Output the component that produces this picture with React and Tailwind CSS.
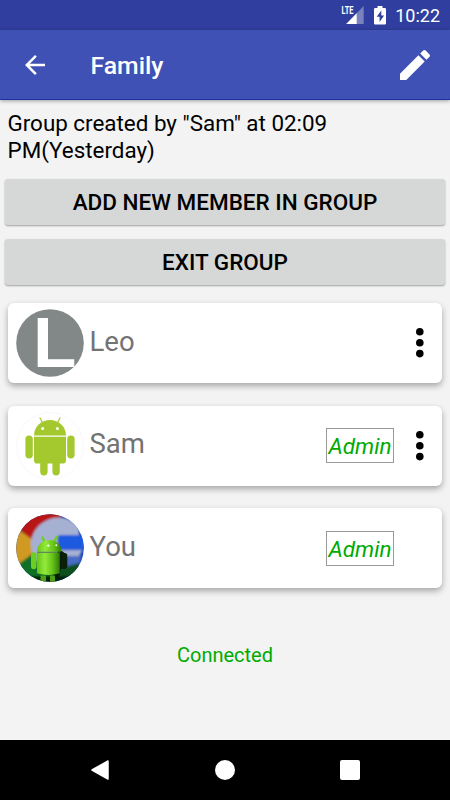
import { MdEdit, MdArrowBack } from 'react-icons/md';

const members = [
  { name: 'Leo', avatar: LetterAvatar, admin: false, menu: true },
  { name: 'Sam', avatar: RobotAvatar, admin: true, menu: true },
  { name: 'You', avatar: PhotoAvatar, admin: true, menu: false },
];

function LetterAvatar({ name }) {
  return (
    <svg viewBox="0 0 68 68" className="w-[68px] h-[68px] overflow-visible font-['Liberation_Sans',sans-serif]">
      <circle cx="34" cy="34" r="33.8" fill="#828888" />
      <text x="17" y="57.600" fontSize="71" fontWeight="700" fill="#fff">{name[0]}</text>
    </svg>
  );
}

function RobotAvatar() {
  return (
    <svg viewBox="0 0 68 68" className="w-[68px] h-[68px]">
      <circle cx="34" cy="34" r="33.4" fill="#fff" stroke="#ececec" strokeWidth="0.6" strokeDasharray="2 1" />
      <g fill="#a4c92f">
        <path d="M18 23.5a16 15.4 0 0 1 32 0z" />
        <path d="M18 24.700h32v23.500a3.4 3.4 0 0 1-3.4 3.4H21.4A3.4 3.4 0 0 1 18 48.200z" />
        <rect x="9.4" y="23.500" width="7.4" height="23" rx="3.7" />
        <rect x="51.2" y="23.500" width="7.4" height="23" rx="3.7" />
        <rect x="24.2" y="43.500" width="7.4" height="20" rx="3.7" />
        <rect x="36.4" y="43.500" width="7.4" height="20" rx="3.7" />
      </g>
      <path d="M24 6l2.8 5M44 6l-2.8 5" stroke="#a4c92f" strokeWidth="1.2" strokeLinecap="round" />
      <circle cx="26.6" cy="16.6" r="1.5" fill="#fff" />
      <circle cx="41.4" cy="16.6" r="1.5" fill="#fff" />
    </svg>
  );
}

function PhotoAvatar() {
  return (
    <svg viewBox="0 0 68 68" className="w-[68px] h-[68px]">
      <defs>
        <clipPath id="round">
          <circle cx="34" cy="34" r="33.8" />
        </clipPath>
        <filter id="soft">
          <feGaussianBlur stdDeviation="0.9" />
        </filter>
        <linearGradient id="body" x1="0" x2="1">
          <stop offset="0" stopColor="#68c41c" />
          <stop offset="0.35" stopColor="#93ea3a" />
          <stop offset="0.7" stopColor="#62c016" />
          <stop offset="1" stopColor="#2f7a0a" />
        </linearGradient>
        <linearGradient id="sky" x1="0" x2="1" y1="0" y2="0.6">
          <stop offset="0" stopColor="#10207c" />
          <stop offset="1" stopColor="#1c4cc0" />
        </linearGradient>
      </defs>
      <g clipPath="url(#round)">
        <rect width="68" height="68" fill="url(#sky)" />
        <g filter="url(#soft)">
          <path d="M4 16L16-2h26l4 6L16 26z" fill="#b81414" />
          <path d="M3 16l14 10v17L2 51l-6-14z" fill="#d09a20" />
          <path d="M0 52l16-12c8 9 14 12 22 12l24-2 4 20H8z" fill="#0c7028" />
          <path d="M15 32C14 16 28 3 44 3.500c8 .5 15 4 19 9.500v9H42v14h24c-1 3-2 4-3 6H50v10H32C22 52 16 43 15 32z" fill="#a6b0d2" />
          <path d="M43 21h26v14.500H43z" fill="#1c5ae0" />
          <path d="M49 42h16l-2 9-14 4z" fill="#4a6cc4" />
          <path d="M45 54l18-5v20H42z" fill="#07501c" />
          <path d="M6 62h48v8H6z" fill="#04200c" />
        </g>
        <path d="M42 37h4l5 4-1 13-5 1-2 10h-7z" fill="#071c08" />
        <path d="M28.500 28l-2-4.500M38 28l2.500-5" stroke="#69d31b" strokeWidth="2.200" strokeLinecap="round" />
        <path d="M21 37.800c0-15.600 24.500-15.600 24.500 0z" fill="url(#body)" />
        <path d="M21 38.800h22.800v20.500q-11.400 3.500-22.800 0z" fill="url(#body)" />
        <path d="M21 38.300h23.500" stroke="#2b650d" strokeWidth="0.700" />
        <rect x="15" y="38.200" width="5.500" height="17" rx="2.600" fill="#6cce20" />
        <rect x="45.500" y="39" width="5.800" height="16" rx="2.700" fill="#0a2008" />
        <path d="M24.500 61.500h5.500V68h-5.500zM34 61.500h5V68h-5z" fill="#4fa014" />
        <circle cx="32.300" cy="31.600" r="1.200" fill="#efffe0" />
        <circle cx="40.300" cy="31.300" r="1" fill="#efffe0" />
      </g>
    </svg>
  );
}

function StatusBar() {
  return (
    <div className="h-[30px] bg-[#303f9f] flex items-center justify-end pr-[10px] text-white">
      <svg viewBox="0 0 48 24" className="w-12 h-6 mr-[7px]">
        <path d="M23.700 3v18H6.200z" fill="#7782bf" />
        <path d="M16.700 10.200V21H6.200z" fill="#fff" />
        <path d="M1 2h13.500v9.500H1z" fill="#303f9f" />
        <text x="1.500" y="10.800" fontSize="10.500" fontWeight="700" fill="#fff" textLength="12" lengthAdjust="spacingAndGlyphs">LTE</text>
        <path d="M37.500 3h5v2h2.300q1.200 0 1.200 1.200v14q0 1.200-1.200 1.200h-9.600q-1.200 0-1.200-1.200v-14Q34 5 35.200 5h2.300z" fill="#fff" />
        <path d="M41.300 7.500l-4.600 6.200h2.900v5.300l4.500-6.600h-2.800z" fill="#303f9f" />
      </svg>
      <span className="text-[18px] leading-[30px] pt-px">10:22</span>
    </div>
  );
}

function Toolbar() {
  return (
    <header className="h-[70px] bg-[#3f51b5] border-b border-[#1c329c] flex items-center shadow-[0_1px_4px_rgba(0,0,0,0.35)] pl-[20px] pr-[16px] text-white">
      <MdArrowBack className="w-[30px] h-[30px]" />
      <h1 className="flex-1 ml-[40.500px] pt-[2px] text-[24.800px] font-medium leading-8">Family</h1>
      <MdEdit className="w-[40px] h-[40px] -mr-[1px]" />
    </header>
  );
}

function GroupButton({ children }) {
  return (
    <button className="h-[46px] w-full rounded-[3px] bg-[#d6d8d7] text-[22.500px] leading-[47px] font-medium text-black shadow-[0_1px_2px_rgba(0,0,0,0.35)]">
      {children}
    </button>
  );
}

function MemberCard({ member }) {
  const Avatar = member.avatar;
  return (
    <li className="h-[80px] rounded-[6px] bg-white shadow-[0_3px_6px_rgba(0,0,0,0.32)] flex items-center pl-[7.500px] pr-[18px]">
      <Avatar name={member.name} />
      <span className="flex-1 ml-[6px] pb-[3px] text-[27.500px] leading-8 text-[#737373]">{member.name}</span>
      {member.admin && (
        <span className="w-[68px] h-[35px] border border-[#999] text-center text-[22.500px] leading-[34px] italic text-[#00ab00]">Admin</span>
      )}
      <span className="w-2 ml-[22px]">
        {member.menu && (
          <svg viewBox="0 0 8 30" className="w-2 h-[30px]">
            <circle cx="3.800" cy="3.800" r="3.800" />
            <circle cx="3.800" cy="14.700" r="3.800" />
            <circle cx="3.800" cy="25.600" r="3.800" />
          </svg>
        )}
      </span>
    </li>
  );
}

function NavBar() {
  return (
    <nav className="h-[60px] bg-black flex items-center justify-between px-[90px]">
      <svg viewBox="0 0 20 20" className="w-5 h-5">
        <path d="M18 1v18L2 10z" fill="#fff" stroke="#fff" strokeWidth="1.500" strokeLinejoin="round" />
      </svg>
      <span className="w-5 h-5 rounded-full bg-white" />
      <span className="w-5 h-5 rounded-[2px] bg-white" />
    </nav>
  );
}

export default function App() {
  return (
    <div className="w-[450px] h-[800px] flex flex-col bg-[#f3f3f3] font-['Roboto',sans-serif] overflow-hidden">
      <StatusBar />
      <Toolbar />
      <main className="flex-1 flex flex-col">
        <p className="px-[7.500px] pt-[10px] text-[22.400px] leading-[26.500px] text-black">
          Group created by "Sam" at 02:09<br />
          PM(Yesterday)
        </p>
        <div className="flex flex-col gap-[14px] px-[5px] pt-[15.500px]">
          <GroupButton>ADD NEW MEMBER IN GROUP</GroupButton>
          <GroupButton>EXIT GROUP</GroupButton>
        </div>
        <ul className="flex flex-col gap-[22.500px] px-2 pt-[18.500px]">
          {members.map((member) => (
            <MemberCard key={member.name} member={member} />
          ))}
        </ul>
        <p className="mt-[53px] text-center text-[20px] leading-7 text-[#00ab00]">Connected</p>
      </main>
      <NavBar />
    </div>
  );
}
